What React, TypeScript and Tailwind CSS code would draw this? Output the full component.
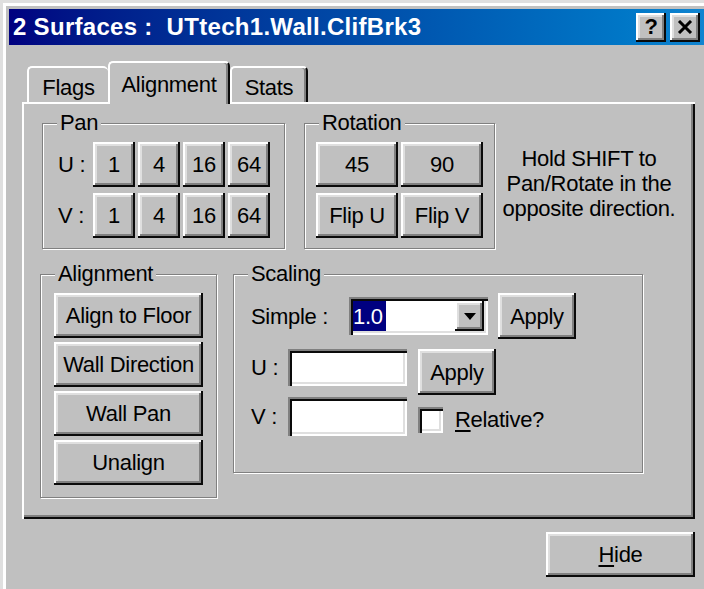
import type { ReactNode } from "react";

// Win98-style bevels, each 2px since the dialog is drawn at double size
const RAISED =
  "bg-[#c0c0c0] shadow-[inset_-2px_-2px_0_#0a0a0a,inset_2px_2px_0_#ffffff,inset_-4px_-4px_0_#808080,inset_4px_4px_0_#dfdfdf]";
const SUNKEN =
  "bg-white shadow-[inset_2px_2px_0_#808080,inset_4px_4px_0_#0a0a0a,inset_-2px_-2px_0_#ffffff,inset_-4px_-4px_0_#dfdfdf]";

function Button({ className = "", children }: { className?: string; children: ReactNode }) {
  return (
    <button type="button" className={`${RAISED} flex shrink-0 items-center justify-center text-black ${className}`}>
      {children}
    </button>
  );
}

function Group({ label, className = "", children }: { label: string; className?: string; children: ReactNode }) {
  return (
    <fieldset
      className={`shrink-0 border border-[#808080] shadow-[1px_1px_0_#ffffff,inset_1px_1px_0_#ffffff] ${className}`}
    >
      <legend className="ml-[14px] bg-[#c0c0c0] px-[3px] leading-[24px]">{label}</legend>
      {children}
    </fieldset>
  );
}

function Tab({ label, active, className = "" }: { label: string; active?: boolean; className?: string }) {
  return (
    <div
      className={`flex items-start justify-center rounded-t-[5px] border-t-2 border-l-2 border-white bg-[#c0c0c0] ${
        active ? "relative z-10 -mb-[2px] h-[43px] pt-[5px]" : "h-[36px] pt-[3px]"
      } ${className}`}
    >
      {label}
    </div>
  );
}

export default function App() {
  return (
    <div className="h-[589px] w-[704px] overflow-hidden bg-[#c0c0c0] pt-[9px] pl-[9px] font-['Liberation_Sans',Arial,sans-serif] text-[22px] tracking-[-0.3px] text-black shadow-[inset_3px_3px_0_#dfdfdf,inset_6px_6px_0_#ffffff]">
      {/* caption bar */}
      <div className="flex h-[36px] w-[695px] items-center bg-linear-to-r from-[#000080] to-[#1084d0] pl-[4px] pr-[4px]">
        <span className="flex-1 whitespace-pre text-[24px] font-bold tracking-[0.3px] text-white">
          {"2 Surfaces :  UTtech1.Wall.ClifBrk3"}
        </span>
        <Button className="h-[29px] w-[30px] pb-[2px] text-[22px] font-bold">?</Button>
        <Button className="ml-[4px] h-[29px] w-[30px]">
          <svg width="16" height="14" viewBox="0 0 16 14">
            <path d="M2 1 L14 13 M14 1 L2 13" stroke="#000" strokeWidth="3" />
          </svg>
        </Button>
      </div>

      <div className="pl-[13px]">
        {/* tab strip */}
        <div className="mt-[16px] flex items-end">
          <Tab label="Flags" className="ml-[5px] w-[81px]" />
          <Tab
            label="Alignment"
            active
            className="w-[122px] border-r-2 border-r-[#0a0a0a] shadow-[inset_-2px_0_0_#808080]"
          />
          <Tab
            label="Stats"
            className="w-[78px] border-r-2 border-r-[#0a0a0a] shadow-[inset_-2px_0_0_#808080]"
          />
        </div>

        {/* tab page */}
        <div className="h-[417px] w-[673px] bg-[#c0c0c0] shadow-[inset_2px_2px_0_#ffffff,inset_-2px_-2px_0_#0a0a0a,inset_-4px_-4px_0_#808080]">
          <div className="flex pt-[9px] pl-[20px]">
            <Group label="Pan" className="h-[138px] w-[243px]">
              <div className="flex flex-col gap-[6px] pt-[7px] pl-[15px]">
                {["U", "V"].map((axis) => (
                  <div key={axis} className="flex items-center">
                    <span className="w-[35px]">{axis} :</span>
                    <div className="flex gap-[3px]">
                      {["1", "4", "16", "64"].map((n) => (
                        <Button key={n} className="h-[45px] w-[42px]">
                          {n}
                        </Button>
                      ))}
                    </div>
                  </div>
                ))}
              </div>
            </Group>

            <Group label="Rotation" className="ml-[19px] h-[138px] w-[191px]">
              <div className="grid grid-cols-[82px_82px] gap-x-[3px] gap-y-[6px] pt-[7px] pl-[11px]">
                <Button className="h-[45px] w-[82px]">45</Button>
                <Button className="h-[45px] w-[82px]">90</Button>
                <Button className="h-[45px] w-[82px]">Flip U</Button>
                <Button className="h-[45px] w-[82px]">Flip V</Button>
              </div>
            </Group>

            <p className="mt-[35px] ml-[4px] w-[180px] text-center leading-[25px]">
              Hold SHIFT to
              <br />
              Pan/Rotate in the
              <br />
              opposite direction.
            </p>
          </div>

          <div className="mt-[13px] flex pl-[18px]">
            <Group label="Alignment" className="h-[236px] w-[177px]">
              <div className="flex flex-col gap-[4px] pt-[7px] pl-[13px]">
                {["Align to Floor", "Wall Direction", "Wall Pan", "Unalign"].map((b) => (
                  <Button key={b} className="h-[45px] w-[149px]">
                    {b}
                  </Button>
                ))}
              </div>
            </Group>

            <Group label="Scaling" className="ml-[16px] h-[211px] w-[410px]">
              <div className="pt-[7px] pl-[17px]">
                <div className="flex h-[46px] items-center">
                  <span className="w-[98px]">Simple :</span>
                  <div className={`${SUNKEN} flex h-[38px] w-[139px] p-[4px]`}>
                    <span className="flex h-full items-center bg-[#000080] pr-[3px] text-white">1.0</span>
                    <div className="flex-1" />
                    <div className={`${RAISED} flex h-full w-[29px] items-center justify-center`}>
                      <svg width="12" height="7" viewBox="0 0 12 7">
                        <path d="M0 0 H12 L6 7 Z" fill="#000" />
                      </svg>
                    </div>
                  </div>
                  <Button className="ml-[10px] h-[46px] w-[78px]">Apply</Button>
                </div>

                <div className="mt-[10px] flex">
                  <div className="flex flex-col gap-[11px]">
                    <div className="flex items-center">
                      <span className="w-[37px]">U :</span>
                      <div className={`${SUNKEN} h-[37px] w-[119px]`} />
                    </div>
                    <div className="flex items-center">
                      <span className="w-[37px]">V :</span>
                      <div className={`${SUNKEN} h-[39px] w-[119px]`} />
                    </div>
                  </div>
                  <div className="ml-[11px] flex flex-col">
                    <Button className="h-[46px] w-[78px]">Apply</Button>
                    <div className="mt-[8px] flex items-center">
                      <div className={`${SUNKEN} h-[26px] w-[25px]`} />
                      <span className="ml-[12px]">
                        <span className="underline decoration-2 underline-offset-[3px]">R</span>elative?
                      </span>
                    </div>
                  </div>
                </div>
              </div>
            </Group>
          </div>
        </div>

        <div className="mt-[13px] flex w-[673px] justify-end">
          <Button className="h-[45px] w-[149px]">
            <span className="underline decoration-2 underline-offset-[3px]">H</span>ide
          </Button>
        </div>
      </div>
    </div>
  );
}
